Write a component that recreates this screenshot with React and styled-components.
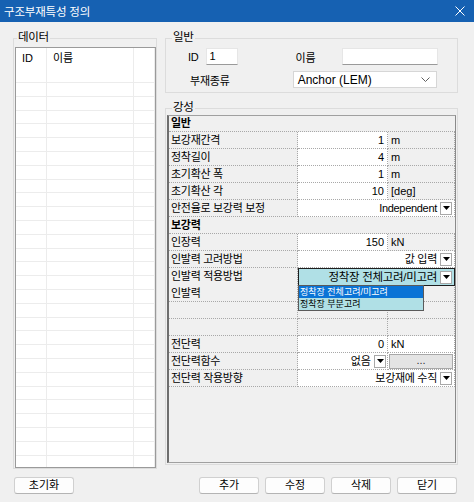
import React from 'react'
import styled, { createGlobalStyle } from 'styled-components'

const GlobalStyle = createGlobalStyle`
  html, body {
    margin: 0;
    padding: 0;
    background: #f0f0f0;
  }
  body {
    font-family: "Liberation Sans", "Noto Sans CJK KR", sans-serif;
    font-size: 11px;
    color: #000;
  }
  * { box-sizing: border-box; }
`

const listRows = Array.from({ length: 28 }, (_, i) => i)

function DropArrow() {
  return (
    <DropButton>
      <svg width="7" height="4" viewBox="0 0 7 4">
        <path d="M0 0 L7 0 L3.5 4 Z" fill="#000" />
      </svg>
    </DropButton>
  )
}

function App() {
  return (
    <Window>
      <GlobalStyle />
      <TitleBar>
        <Title>구조부재특성 정의</Title>
        <svg width="10" height="10" viewBox="0 0 10 10">
          <path d="M0.5 0.5 L9.5 9.5 M9.5 0.5 L0.5 9.5" stroke="#fff" strokeWidth="1" />
        </svg>
      </TitleBar>

      <Body>
        <DataGroup>
          <Legend $left={3}>데이터</Legend>
          <List>
            <ListHeader>
              <ListCell $pad>ID</ListCell>
              <ListCell $pad>이름</ListCell>
              <ListCell />
            </ListHeader>
            {listRows.map(i => (
              <ListRow key={i}>
                <ListCell />
                <ListCell />
                <ListCell />
              </ListRow>
            ))}
          </List>
        </DataGroup>

        <RightColumn>
          <GeneralGroup>
            <Legend $left={6}>일반</Legend>
            <FieldRow>
              <FieldLabel $ml={22}>ID</FieldLabel>
              <TextBox $w={32} $ml={7}>1</TextBox>
              <FieldLabel $ml={58}>이름</FieldLabel>
              <TextBox $w={96} $ml={27} />
            </FieldRow>
            <FieldRow>
              <FieldLabel $ml={24}>부재종류</FieldLabel>
              <SelectBox $ml={63}>
                Anchor (LEM)
                <svg width="9" height="5" viewBox="0 0 9 5">
                  <path d="M0.5 0.5 L4.5 4.5 L8.5 0.5" stroke="#606060" fill="none" strokeWidth="1" />
                </svg>
              </SelectBox>
            </FieldRow>
          </GeneralGroup>

          <StiffnessGroup>
            <Legend $left={6}>강성</Legend>
            <PropertyGrid>
              <SectionRow $h={16}>일반</SectionRow>
              <GridRow>
                <LabelCell>보강재간격</LabelCell>
                <ValueCell>1</ValueCell>
                <UnitCell>m</UnitCell>
              </GridRow>
              <GridRow>
                <LabelCell>정착길이</LabelCell>
                <ValueCell>4</ValueCell>
                <UnitCell>m</UnitCell>
              </GridRow>
              <GridRow>
                <LabelCell>초기확산 폭</LabelCell>
                <ValueCell>1</ValueCell>
                <UnitCell>m</UnitCell>
              </GridRow>
              <GridRow>
                <LabelCell>초기확산 각</LabelCell>
                <ValueCell>10</ValueCell>
                <UnitCell>[deg]</UnitCell>
              </GridRow>
              <GridRow>
                <LabelCell>안전율로 보강력 보정</LabelCell>
                <ComboCell>
                  Independent
                  <DropArrow />
                </ComboCell>
              </GridRow>
              <SectionRow $h={17}>보강력</SectionRow>
              <GridRow>
                <LabelCell>인장력</LabelCell>
                <ValueCell>150</ValueCell>
                <UnitCell>kN</UnitCell>
              </GridRow>
              <GridRow>
                <LabelCell>인발력 고려방법</LabelCell>
                <ComboCell>
                  값 입력
                  <DropArrow />
                </ComboCell>
              </GridRow>
              <GridRow>
                <LabelCell>인발력 적용방법</LabelCell>
                <ComboCell $active>
                  정착장 전체고려/미고려
                  <DropArrow />
                  <DropList>
                    <DropItem $selected>정착장 전체고려/미고려</DropItem>
                    <DropItem>정착장 부분고려</DropItem>
                  </DropList>
                </ComboCell>
              </GridRow>
              <GridRow>
                <LabelCell>인발력</LabelCell>
                <ValueCell $disabled />
                <UnitCell />
              </GridRow>
              <GridRow>
                <LabelCell />
                <ValueCell $disabled />
                <UnitCell />
              </GridRow>
              <GridRow>
                <LabelCell />
                <ValueCell $disabled />
                <UnitCell />
              </GridRow>
              <GridRow>
                <LabelCell>전단력</LabelCell>
                <ValueCell>0</ValueCell>
                <UnitCell $white>kN</UnitCell>
              </GridRow>
              <GridRow>
                <LabelCell>전단력함수</LabelCell>
                <ValueCell $combo>
                  없음
                  <DropArrow />
                </ValueCell>
                <UnitCell $white>
                  <EllipsisButton>...</EllipsisButton>
                </UnitCell>
              </GridRow>
              <GridRow>
                <LabelCell>전단력 작용방향</LabelCell>
                <ComboCell>
                  보강재에 수직
                  <DropArrow />
                </ComboCell>
              </GridRow>
            </PropertyGrid>
          </StiffnessGroup>
        </RightColumn>
      </Body>

      <ButtonBar>
        <Button>초기화</Button>
        <Spacer />
        <Button>추가</Button>
        <Button>수정</Button>
        <Button>삭제</Button>
        <Button>닫기</Button>
      </ButtonBar>
    </Window>
  )
}

export default App

const Window = styled.div`
    width: 474px;
    height: 502px;
    display: flex;
    flex-direction: column;
    background: #f0f0f0;
    overflow: hidden;
`

const TitleBar = styled.div`
    height: 22px;
    flex: none;
    background: #1661b2;
    color: #fff;
    display: flex;
    align-items: center;
    justify-content: space-between;
    padding: 0 9px 0 4px;
`

const Title = styled.div`
    font-size: 11.5px;
    letter-spacing: -0.2px;
`

const Body = styled.div`
    height: 447px;
    flex: none;
    display: flex;
    gap: 8px;
    padding: 16px 16px 0 13px;
`

const GroupBox = styled.div`
    position: relative;
    border: 1px solid #dcdcdc;
`

const Legend = styled.span`
    position: absolute;
    top: -9px;
    left: ${p => p.$left}px;
    padding: 0 1px;
    background: #f0f0f0;
    font-size: 11.5px;
    line-height: 14px;
    letter-spacing: -0.3px;
`

const DataGroup = styled(GroupBox)`
    width: 144px;
    padding: 8px 0 0 1px;
    display: flex;
`

const List = styled.div`
    flex: 1;
    background: #fff;
    border: 1px solid #9a9a9a;
    overflow: hidden;
`

const ListHeader = styled.div`
    display: grid;
    grid-template-columns: 31px 87px 1fr;
    height: 34px;
`

const ListRow = styled.div`
    display: grid;
    grid-template-columns: 31px 87px 1fr;
    height: 13.8px;
    border-top: 1px solid #ececec;
`

const ListCell = styled.div`
    border-right: 1px solid #ececec;
    padding: ${p => (p.$pad ? '4px 0 0 6px' : '0')};
    line-height: 13px;
    font-size: 11px;
`

const RightColumn = styled.div`
    width: 293px;
    display: flex;
    flex-direction: column;
    gap: 15px;
    padding-bottom: 4px;
`

const GeneralGroup = styled(GroupBox)`
    height: 55px;
    flex: none;
    padding-top: 9px;
    display: flex;
    flex-direction: column;
    gap: 6px;
`

const FieldRow = styled.div`
    display: flex;
    align-items: center;
    height: 17px;
`

const FieldLabel = styled.span`
    margin-left: ${p => p.$ml}px;
    font-size: 11px;
    letter-spacing: -0.2px;
`

const TextBox = styled.div`
    width: ${p => p.$w}px;
    height: 17px;
    margin-left: ${p => p.$ml}px;
    background: #fff;
    border: 1px solid #e6e6e6;
    border-bottom-color: #9a9a9a;
    padding-left: 3px;
    line-height: 15px;
    font-size: 11px;
`

const SelectBox = styled.div`
    width: 144px;
    height: 17px;
    margin-left: ${p => p.$ml}px;
    background: #fff;
    border: 1px solid #d6d6d6;
    display: flex;
    align-items: center;
    justify-content: space-between;
    padding: 0 6px 0 4px;
    font-size: 12px;
`

const StiffnessGroup = styled(GroupBox)`
    flex: 1;
    padding: 6px 1px 1px 1px;
    display: flex;
`

const PropertyGrid = styled.div`
    flex: 1;
    border: 1px solid #a0a0a0;
    border-left: 2px solid #6e6e6e;
    border-right-color: #8a8a8a;
    background: #f0f0f0;
    display: flex;
    flex-direction: column;
`

const SectionRow = styled.div`
    height: ${p => p.$h}px;
    flex: none;
    font-weight: bold;
    padding-left: 2px;
    line-height: ${p => p.$h - 1}px;
    border-bottom: 1px dotted #a8a8a8;
    letter-spacing: -0.3px;
`

const GridRow = styled.div`
    display: grid;
    grid-template-columns: 129px 90px 1fr;
    height: 17px;
    flex: none;
`

const Cell = styled.div`
    border-right: 1px dotted #a8a8a8;
    border-bottom: 1px dotted #a8a8a8;
    line-height: 16px;
    white-space: nowrap;
    overflow: hidden;
`

const LabelCell = styled(Cell)`
    background: #f0f0f0;
    padding-left: 2px;
    letter-spacing: -0.3px;
`

const ValueCell = styled(Cell)`
    background: ${p => (p.$disabled ? '#f0f0f0' : '#fff')};
    text-align: right;
    display: ${p => (p.$combo ? 'flex' : 'block')};
    align-items: center;
    justify-content: flex-end;
    gap: 3px;
    padding-right: ${p => (p.$combo ? '1px' : '3px')};
`

const UnitCell = styled(Cell)`
    background: ${p => (p.$white ? '#fff' : '#f0f0f0')};
    padding-left: 3px;
    display: flex;
    align-items: center;
`

const ComboCell = styled(Cell)`
    grid-column: span 2;
    position: relative;
    overflow: visible;
    display: flex;
    align-items: center;
    justify-content: flex-end;
    gap: 3px;
    padding-right: 2px;
    background: ${p => (p.$active ? '#b0e0e6' : '#fff')};
    border: ${p => (p.$active ? '1px solid #1e1e1e' : undefined)};
    font-size: ${p => (p.$active ? '11.5px' : '11px')};
    letter-spacing: -0.3px;
`

const DropButton = styled.span`
    width: 12px;
    height: 13px;
    flex: none;
    background: #fff;
    border: 1px solid #a8a8a8;
    display: flex;
    align-items: center;
    justify-content: center;
`

const DropList = styled.div`
    position: absolute;
    top: 100%;
    left: -1px;
    width: 126px;
    border: 1px solid #5a5a5a;
    background: #b0e0e6;
    z-index: 2;
`

const DropItem = styled.div`
    height: 12px;
    line-height: 12px;
    padding-left: 1px;
    font-size: 9px;
    letter-spacing: 0;
    text-align: left;
    background: ${p => (p.$selected ? '#0a74d6' : '#b0e0e6')};
    color: ${p => (p.$selected ? '#fff' : '#000')};
`

const EllipsisButton = styled.div`
    flex: 1;
    height: 15px;
    margin-left: -2px;
    margin-right: 1px;
    background: #e4e4e4;
    border: 1px solid #a8a8a8;
    text-align: center;
    line-height: 11px;
    color: #333;
`

const ButtonBar = styled.div`
    display: flex;
    gap: 6px;
    padding: 8px 17px 0 14px;
`

const Spacer = styled.div`
    flex: 1;
`

const Button = styled.div`
    width: 60px;
    height: 17px;
    background: #fdfdfd;
    border: 1px solid #d0d0d0;
    border-bottom-color: #b4b4b4;
    border-radius: 3px;
    text-align: center;
    line-height: 15px;
    font-size: 11px;
`
